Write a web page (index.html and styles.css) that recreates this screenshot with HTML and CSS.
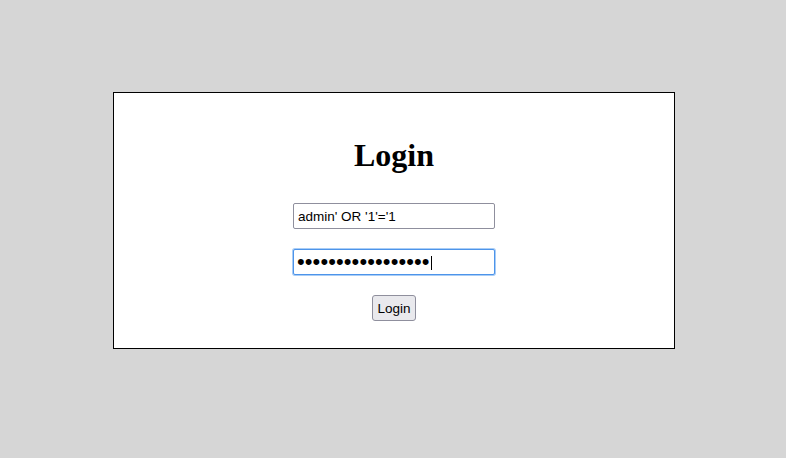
FILE: index.html
```html
<!DOCTYPE html>
<html lang="en">
<head>
    <meta charset="UTF-8">
    <meta name="viewport" content="width=device-width, initial-scale=1.0">
    <title>Login</title>
    <link rel="stylesheet" href="styles.css">
</head>
<body>

<div class="login-box">
    <h1>Login</h1>
    <form class="login-form" onsubmit="return false;">
        <input class="input-field" type="text" id="username" value="admin' OR '1'='1" />
        <div class="field-wrap">
            <input class="input-field password focused" type="password" id="password" value="xxxxxxxxxxxxxxxxx" />
            <!-- text caret at the end of the password -->
            <span class="caret"></span>
        </div>
        <button class="button" type="submit">Login</button>
    </form>
</div>

</body>
</html>
```

FILE: styles.css
```css
body {
    margin: 0;
    padding: 0 0 0 2px;
    min-height: 100vh;
    background: #d6d6d6;
    font-family: 'Liberation Serif', serif;
}
.login-box {
    box-sizing: border-box;
    width: 562px;
    margin: 92px auto 0;
    padding: 44px 0 27px;
    background: white;
    border: 1px solid black;
    text-align: center;
}
h1 {
    margin: 0 0 29px;
    font-size: 32px;
    font-weight: bold;
    line-height: 37px;
}
.login-form {
    display: flex;
    flex-direction: column;
    align-items: center;
    gap: 20px;
}
.field-wrap {
    position: relative;
    height: 26px;
}
.input-field {
    box-sizing: border-box;
    width: 202px;
    height: 26px;
    padding: 0 4px;
    border: 1px solid #8f8f9d;
    border-radius: 2px;
    background: white;
    color: black;
    font-family: 'Liberation Sans', Arial, sans-serif;
    font-size: 13.5px;
    outline: none;
}
.input-field.password {
    padding: 0 3px;
    font-size: 22px;
    letter-spacing: 0.1px;
}
.input-field.focused {
    border-color: #4d94ea;
    box-shadow: 0 0 0 1px #a9cdf6;
}
.caret {
    position: absolute;
    left: 138px;
    top: 7px;
    width: 1px;
    height: 14px;
    background: black;
}
.button {
    box-sizing: border-box;
    height: 26px;
    padding: 0 4px;
    background: #e9e9ed;
    border: 1px solid #8f8f9d;
    border-radius: 3px;
    color: black;
    font-family: 'Liberation Sans', Arial, sans-serif;
    font-size: 13.5px;
    cursor: pointer;
}
```
